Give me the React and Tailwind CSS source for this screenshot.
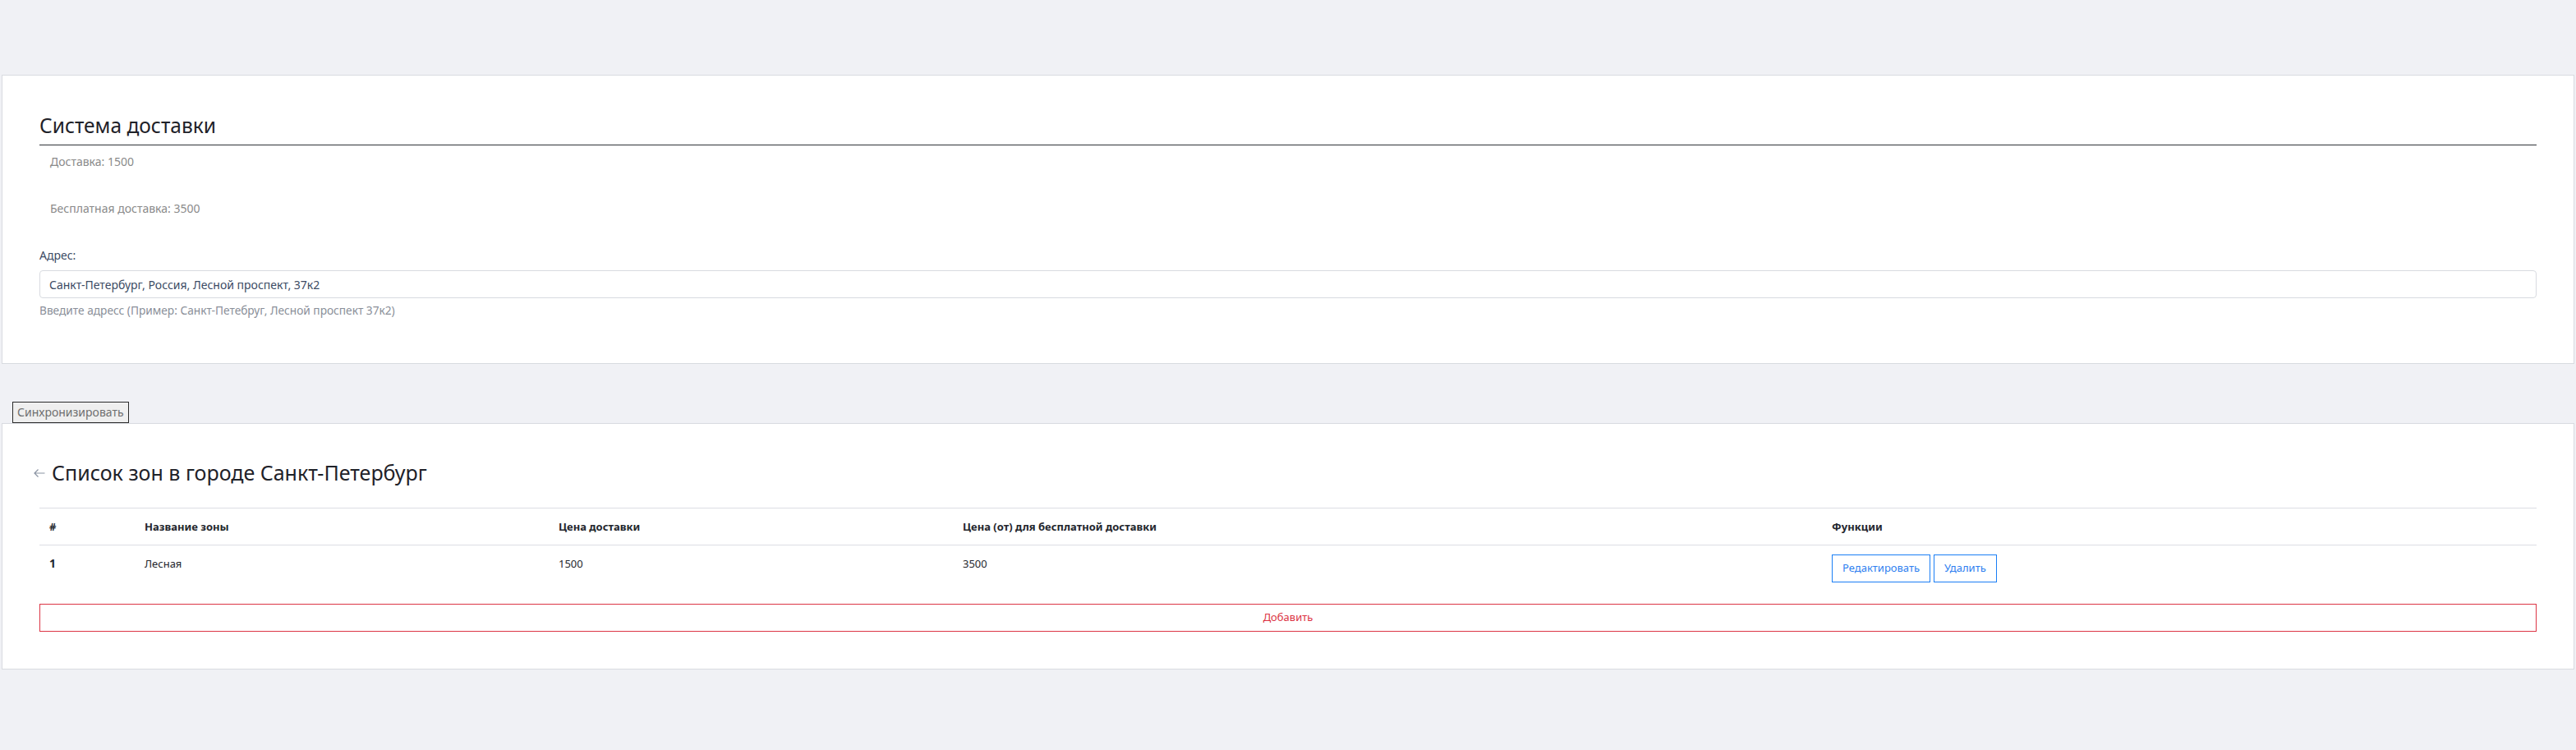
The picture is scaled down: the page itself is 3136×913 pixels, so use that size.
import React from "react";

const zones = [{ id: 1, name: "Лесная", price: 1500, freeFrom: 3500 }];

function DeliveryCard() {
  return (
    <section className="border border-[#d8dbe0] bg-white px-[45px] pt-[45px] pb-[54px]">
      <h1 className="border-b border-[#2f3237] pb-[7px] text-[24.5px] leading-[32px] font-normal text-[#1f2229]">
        Система доставки
      </h1>
      <p className="mt-[10px] pl-[13px] text-[14px] leading-5 text-[#8a8a8a]">Доставка: 1500</p>
      <p className="mt-[37px] pl-[13px] text-[14px] leading-5 text-[#8a8a8a]">Бесплатная доставка: 3500</p>
      <label className="mt-[37px] block text-[14px] leading-5 text-[#3c4b64]">Адрес:</label>
      <input
        className="mt-[8px] block h-[34px] w-full rounded-[4px] border border-[#d8dbe0] px-[11px] text-[14px] text-[#3c4b64] outline-none"
        defaultValue="Санкт-Петербург, Россия, Лесной проспект, 37к2"
      />
      <p className="mt-[5px] text-[13.7px] leading-5 text-[#8a8f99]">
        Введите адресс (Пример: Санкт-Петебруг, Лесной проспект 37к2)
      </p>
    </section>
  );
}

function ZonesCard() {
  return (
    <section className="border border-[#d8dbe0] bg-white px-[45px] pt-[45px] pb-[45px]">
      <div className="flex items-center">
        <svg className="-ml-[7px] mr-[8px] h-[12px] w-[14px]" viewBox="0 0 14 12" fill="none" stroke="#8a93a2" strokeWidth="1.2">
          <path d="M13.5 6H1M5.5 1.5L1 6l4.5 4.5" />
        </svg>
        <h2 className="text-[25px] leading-[29px] font-normal text-[#1f2229]">Список зон в городе Санкт-Петербург</h2>
      </div>
      <table className="mt-[28px] w-full table-fixed border-collapse text-[13px] text-[#23262d]">
        <colgroup>
          <col className="w-[116px]" />
          <col className="w-[504px]" />
          <col className="w-[492px]" />
          <col className="w-[1058px]" />
          <col />
        </colgroup>
        <thead>
          <tr className="border-y border-[#dcdde3]">
            <th className="px-3 py-3 text-left font-bold leading-5">#</th>
            <th className="px-3 py-3 text-left font-bold leading-5">Название зоны</th>
            <th className="px-3 py-3 text-left font-bold leading-5">Цена доставки</th>
            <th className="px-3 py-3 text-left font-bold leading-5">Цена (от) для бесплатной доставки</th>
            <th className="px-3 py-3 text-left font-bold leading-5">Функции</th>
          </tr>
        </thead>
        <tbody>
          {zones.map((z) => (
            <tr key={z.id} className="align-top">
              <td className="px-3 py-3 text-[14px] leading-5 font-bold">{z.id}</td>
              <td className="px-3 py-3 leading-5">{z.name}</td>
              <td className="px-3 py-3 leading-5">{z.price}</td>
              <td className="px-3 py-3 leading-5">{z.freeFrom}</td>
              <td className="px-3 py-3">
                <div className="-mt-px flex gap-[4px]">
                  <button className="h-[34px] border border-[#1a7ef5] bg-white px-[12px] text-[13px] text-[#2f7ff0]">
                    Редактировать
                  </button>
                  <button className="h-[34px] border border-[#1a7ef5] bg-white px-[12px] text-[13px] text-[#2f7ff0]">
                    Удалить
                  </button>
                </div>
              </td>
            </tr>
          ))}
        </tbody>
      </table>
      <button className="mt-[14px] block h-[34px] w-full border border-[#dc3545] bg-white text-[13px] text-[#dc3545]">
        Добавить
      </button>
    </section>
  );
}

export default function App() {
  return (
    <div className="min-h-[913px] bg-[#f0f1f5] px-[2px] pt-[91px] pb-[100px] font-['Noto_Sans',sans-serif]">
      <DeliveryCard />
      <div className="mt-[46px] pl-[13px]">
        <button className="block h-[26px] border border-[#2b2b2b] bg-[#efefef] px-[5px] text-[14px] leading-none text-[#6f6f6f]">
          Синхронизировать
        </button>
      </div>
      <ZonesCard />
    </div>
  );
}
